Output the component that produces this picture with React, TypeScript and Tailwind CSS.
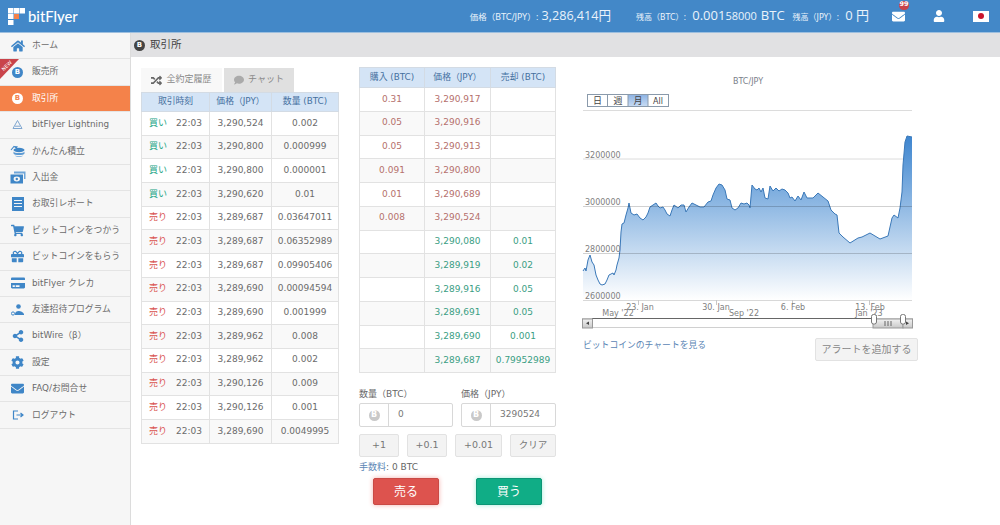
import { FaHome, FaShoppingCart, FaGift, FaCreditCard, FaShareAlt, FaCog, FaEnvelope, FaUser, FaRandom, FaComment } from "react-icons/fa";

const SANS = "font-['DejaVu_Sans','Noto_Sans_CJK_JP',sans-serif]";

function CoinIcon({ className }: { className?: string }) {
  return (
    <span className={"flex items-center justify-center rounded-full font-bold " + className}>B</span>
  );
}

function TriangleIcon() {
  return (
    <svg width="13" height="13" viewBox="0 0 13 13" fill="none" stroke="#7fa6d0" strokeWidth="1">
      <path d="M6.5 2.5 L11 10.5 H2 Z" />
      <path d="M4 8.2 H9" />
    </svg>
  );
}

function CoinsIcon() {
  return (
    <svg width="15" height="14" viewBox="0 0 15 14" fill="#3f86c7">
      <path d="M1 6 L4 2.5 L7 4" fill="none" stroke="#3f86c7" strokeWidth="1.1" />
      <path d="M5 2L8 2.5L6 5Z" />
      <ellipse cx="9" cy="6" rx="5.5" ry="2.2" />
      <path d="M3.5 7.5C4 9.5 14 9.5 14.5 7.5V9.5C14 11.5 4 11.5 3.5 9.5Z" fill="#5c9ad3" />
      <path d="M5 11.5C6 13.5 12 13.5 13 11.5C11 12.3 7 12.3 5 11.5Z" fill="#8db9e0" />
    </svg>
  );
}

function BillsIcon() {
  return (
    <svg width="16" height="13" viewBox="0 0 16 13" fill="#3f86c7">
      <path d="M4 0.5H15.5V8H14V2.5H4Z" fill="#6fa5d8" />
      <path d="M0.5 3.5H13V12.5H0.5Z" />
      <ellipse cx="6.8" cy="8" rx="3.2" ry="2.4" fill="#f6f6f6" />
      <circle cx="6.8" cy="8" r="1.2" />
    </svg>
  );
}

function ReportIcon() {
  return (
    <svg width="12" height="14" viewBox="0 0 12 14" fill="#3f86c7">
      <path d="M0 0H12V14H0Z" />
      <path d="M2 3H10V4H2ZM2 6H10V7H2ZM2 9H10V10H2Z" fill="#f5f5f5" />
    </svg>
  );
}

function FriendsIcon() {
  return (
    <svg width="13" height="12" viewBox="0 0 13 12" fill="#3f86c7">
      <circle cx="7.5" cy="2.5" r="2.3" />
      <path d="M4 10 C4 6 11 6 13 10 V11 H4Z" />
      <circle cx="2" cy="9.5" r="1.6" fill="none" stroke="#3f86c7" />
    </svg>
  );
}

function LogoutIcon() {
  return (
    <svg width="12" height="10" viewBox="0 0 12 10" fill="none" stroke="#3f86c7" strokeWidth="1.2">
      <path d="M6 1H1.5V9H6" />
      <path d="M4.5 5H11M8.5 3L11 5L8.5 7" />
    </svg>
  );
}

const ICON = "text-[#3f86c7]";
const NAV = [
  { label: "ホーム", icon: <FaHome className={ICON} size={14} /> },
  { label: "販売所", icon: <CoinIcon className="h-[11px] w-[11px] bg-[#3f86c7] text-[7px] text-white" /> },
  { label: "取引所", icon: <CoinIcon className="h-[11px] w-[11px] bg-white text-[7px] text-[#f4824a]" />, active: true },
  { label: "bitFlyer Lightning", icon: <TriangleIcon /> },
  { label: "かんたん積立", icon: <CoinsIcon /> },
  { label: "入出金", icon: <BillsIcon /> },
  { label: "お取引レポート", icon: <ReportIcon /> },
  { label: "ビットコインをつかう", icon: <FaShoppingCart className={ICON} size={13} /> },
  { label: "ビットコインをもらう", icon: <FaGift className={ICON} size={13} /> },
  { label: "bitFlyer クレカ", icon: <FaCreditCard className={ICON} size={14} /> },
  { label: "友達招待プログラム", icon: <FriendsIcon /> },
  { label: "bitWire（β）", icon: <FaShareAlt className={ICON} size={12} /> },
  { label: "設定", icon: <FaCog className={ICON} size={13} /> },
  { label: "FAQ/お問合せ", icon: <FaEnvelope className={ICON} size={13} /> },
  { label: "ログアウト", icon: <LogoutIcon /> },
];

const TRADES = [
  ["買い", "3,290,524", "0.002"],
  ["買い", "3,290,800", "0.000999"],
  ["買い", "3,290,800", "0.000001"],
  ["買い", "3,290,620", "0.01"],
  ["売り", "3,289,687", "0.03647011"],
  ["売り", "3,289,687", "0.06352989"],
  ["売り", "3,289,687", "0.09905406"],
  ["売り", "3,289,690", "0.00094594"],
  ["売り", "3,289,690", "0.001999"],
  ["売り", "3,289,962", "0.008"],
  ["売り", "3,289,962", "0.002"],
  ["売り", "3,290,126", "0.009"],
  ["売り", "3,290,126", "0.001"],
  ["売り", "3,289,690", "0.0049995"],
];

const BOOK = [
  ["0.31", "3,290,917", ""],
  ["0.05", "3,290,916", ""],
  ["0.05", "3,290,913", ""],
  ["0.091", "3,290,800", ""],
  ["0.01", "3,290,689", ""],
  ["0.008", "3,290,524", ""],
  ["", "3,290,080", "0.01"],
  ["", "3,289,919", "0.02"],
  ["", "3,289,916", "0.05"],
  ["", "3,289,691", "0.05"],
  ["", "3,289,690", "0.001"],
  ["", "3,289,687", "0.79952989"],
];

const LINE =
  "M583 271L585 268L586 271L588 260L590 255L592 262L594 265L596 275L598 280L600 284L602 285L605 284L607 280L609 275L611 274L613 273L614 275L616 270L617 265L619 258L620 250L621 232L622 224L624 223L626 215L628 208L629 203L631 213L634 215L637 214L640 218L643 220L646 217L648 213L650 207L653 205L656 203L658 206L660 208L663 207L665 210L667 214L670 216L672 210L674 205L678 208L681 205L684 205L686 212L689 207L692 203L696 205L700 207L704 207L708 202L711 201L713 195L716 188L719 184L722 185L725 190L727 199L730 200L732 208L735 210L738 208L741 203L744 204L747 203L749 205L750 208L752 185L755 189L757 190L759 188L761 192L763 188L765 198L768 199L770 186L773 191L776 188L779 191L782 189L785 190L788 193L790 198L792 197L795 201L798 196L801 200L804 192L807 198L813 198L818 193L823 197L828 201L831 210L835 214L837 215L839 233L843 237L850 243L858 238L862 237L870 233L875 236L880 239L888 236L892 218L894 215L898 218L900 208L902 192L903 165L905 142L907 136L912 137";

function Chart() {
  return (
    <svg width="347" height="265" viewBox="578 67 347 265" className="block">
      <defs>
        <linearGradient id="area" x1="0" y1="136" x2="0" y2="300" gradientUnits="userSpaceOnUse">
          <stop offset="0" stopColor="#3d85cf" />
          <stop offset="1" stopColor="#ffffff" />
        </linearGradient>
        <linearGradient id="on" x1="0" y1="0" x2="0" y2="1">
          <stop offset="0" stopColor="#8fb4e4" />
          <stop offset="1" stopColor="#c6daf3" />
        </linearGradient>
        <linearGradient id="bar" x1="0" y1="0" x2="0" y2="1">
          <stop offset="0" stopColor="#f2f2f2" />
          <stop offset="1" stopColor="#c8c8c8" />
        </linearGradient>
      </defs>
      <text x="748" y="84" textAnchor="middle" fontSize="8" fill="#7a808a" fontFamily="DejaVu Sans">BTC/JPY</text>

      <g fontFamily="DejaVu Sans, Noto Sans CJK JP" fontSize="9" fill="#444" textAnchor="middle">
        <rect x="587.5" y="94.5" width="81" height="12" fill="#fff" stroke="#8a9aab" />
        <rect x="628" y="95" width="20" height="11" fill="url(#on)" />
        <path d="M607.5 94.5V106.5M628 94.5V106.5M648 94.5V106.5" stroke="#8a9aab" />
        <text x="597.5" y="104">日</text>
        <text x="618" y="104">週</text>
        <text x="638" y="104">月</text>
        <text x="658" y="104" fontSize="8">All</text>
      </g>

      <path d="M583 110.5H912" stroke="#dcdcdc" strokeWidth="1" />
      <path d="M583 159H912" stroke="#dcdcdc" strokeWidth="1" />
      <path d={LINE + "L912 300L583 300Z"} fill="url(#area)" />
      <path d={LINE} fill="none" stroke="#3a78b8" strokeWidth="1" />
      <path d="M583 206.5H912" stroke="#000" strokeOpacity="0.18" strokeWidth="1" />
      <path d="M583 253.5H912" stroke="#000" strokeOpacity="0.18" strokeWidth="1" />
      <path d="M583 300.5H912" stroke="#d8d8d8" strokeWidth="1" />
      <path d="M638.5 300V305M716.5 300V305M792.5 300V305M869.5 300V305" stroke="#c8c8c8" />

      <g fontFamily="DejaVu Sans" fontSize="8" fill="#808080">
        <text x="585" y="158">3200000</text>
        <text x="585" y="205">3000000</text>
        <text x="585" y="252">2800000</text>
        <text x="585" y="299">2600000</text>
        <g textAnchor="middle">
          <text x="640" y="310">23. Jan</text>
          <text x="716" y="310">30. Jan</text>
          <text x="793" y="310">6. Feb</text>
          <text x="870" y="310">13. Feb</text>
          <text x="618" y="316">May '22</text>
          <text x="744" y="316">Sep '22</text>
          <text x="869" y="316">Jan '23</text>
        </g>
      </g>

      <rect x="582.5" y="318.5" width="330" height="9" fill="#fff" stroke="#d0d0d0" />
      <path d="M592 318.5H873" stroke="#666" strokeWidth="1.2" />
      <rect x="582.5" y="319" width="10" height="9" fill="url(#bar)" stroke="#999" />
      <path d="M589 321.5V325L586 323.2Z" fill="#444" />
      <rect x="873" y="319" width="30" height="9" fill="url(#bar)" stroke="#999" />
      <path d="M885 321V326M888 321V326M891 321V326" stroke="#666" />
      <rect x="903" y="319" width="9.5" height="9" fill="url(#bar)" stroke="#999" />
      <path d="M906 321.5V325L909 323.2Z" fill="#444" />
      <rect x="871.5" y="314.5" width="5" height="9.5" rx="2" fill="#fff" stroke="#777" />
      <rect x="900.5" y="314.5" width="5" height="9.5" rx="2" fill="#fff" stroke="#777" />
    </svg>
  );
}

function CoinInput({ label, value, width }: { label: string; value: string; width: string }) {
  return (
    <div className={width}>
      <div className="h-[20px] text-[9px] leading-[22px] text-[#666]">{label}</div>
      <div className="flex h-[24px] rounded-[2px] border border-[#d8d8d8] bg-white">
        <div className="flex w-[29px] items-center justify-center border-r border-[#d8d8d8]">
          <CoinIcon className="h-[11px] w-[11px] bg-[#c9c9c9] text-[8px] text-white" />
        </div>
        <div className="flex items-center pl-[9px] text-[9px] text-[#777]">{value}</div>
      </div>
    </div>
  );
}

export default function App() {
  return (
    <div className={"h-[525px] w-[1000px] overflow-hidden bg-white " + SANS}>
      <header className="flex h-[33px] items-center border-b border-[#9dbfdf] bg-[#4388c8] text-white">
        <div className="flex items-center pl-[8px]">
          <svg width="17" height="17" viewBox="0 0 17 17" className="mr-[3px]">
            <path d="M0 0H5.5V5.5H0ZM6 0H11.5V5.5H6ZM12 0H17V5.5H12ZM0 6H5.5V11H0ZM0 12H5.5V17H0Z" fill="#fff" />
            <path d="M6 6H11V11H6Z" fill="#f4824a" />
          </svg>
          <span className="font-['Lato',sans-serif] text-[14.8px] font-medium leading-none">bitFlyer</span>
        </div>
        <div className="ml-auto flex items-baseline text-[#eaf3fb]">
          <span className="text-[8.5px]">価格（BTC/JPY）:</span>
          <span className="ml-[3px] font-['Open_Sans','Noto_Sans_CJK_JP',sans-serif] text-[12.6px]">3,286,414円</span>
          <span className="ml-[25px] text-[8px]">残高（BTC）:</span>
          <span className="ml-[6px] font-['Open_Sans',sans-serif] text-[13px]">0.001</span>
          <span className="font-['Open_Sans',sans-serif] text-[11px]">58000</span>
          <span className="ml-[4px] font-['Open_Sans',sans-serif] text-[13px]">BTC</span>
          <span className="ml-[8px] text-[8px]">残高（JPY）:</span>
          <span className="ml-[6px] font-['Open_Sans','Noto_Sans_CJK_JP',sans-serif] text-[13px]">0 円</span>
        </div>
        <div className="relative ml-[22px] flex w-[14px] justify-center">
          <FaEnvelope size={13} />
          <span className="absolute -top-[9px] left-[8px] flex h-[9px] w-[10px] items-center justify-center rounded-full bg-[#c9434a] text-[6.5px] font-bold">99</span>
        </div>
        <FaUser size={12} className="ml-[28px]" />
        <div className="ml-[28px] mr-[11px] flex h-[11px] w-[16px] items-center justify-center bg-white">
          <span className="h-[6px] w-[6px] rounded-full bg-[#c9142c]" />
        </div>
      </header>

      <div className="flex h-[492px]">
        <nav className="relative w-[131px] shrink-0 overflow-hidden border-r border-[#dcdcdc] bg-[#f6f6f6]">
          {NAV.map((item) => (
            <div
              key={item.label}
              className={
                "flex h-[26.4px] items-center border-b border-[#e4e4e4] text-[8.8px] " +
                (item.active ? "bg-[#f4824a] text-white" : "text-[#6b6b6b]")
              }
            >
              <span className="flex w-[32px] shrink-0 justify-center pl-[3px]">{item.icon}</span>
              <span className="whitespace-nowrap">{item.label}</span>
            </div>
          ))}
          <svg width="19" height="20" viewBox="0 0 19 20" className="absolute left-0 top-[26px]">
            <path d="M0 0H19L0 20Z" fill="#c9434a" />
            <text x="7" y="8.5" textAnchor="middle" fontSize="5" fill="#fff" fontFamily="DejaVu Sans" transform="rotate(-45 7 7)">NEW</text>
          </svg>
        </nav>

        <main className="min-w-0 flex-1">
          <div className="flex h-[24px] items-center bg-[#e1e1e3] pl-[3px] text-[#444]">
            <CoinIcon className="h-[11px] w-[11px] bg-[#444] text-[7px] text-white" />
            <span className="ml-[5px] text-[10.5px]">取引所</span>
          </div>

          <div className="flex pl-[10px] pt-[10px]">
            <div className="w-[198px] shrink-0 pt-[1px]">
              <div className="flex h-[24px] text-[9px] text-[#888]">
                <div className="flex w-[81px] items-center justify-center gap-[4px] bg-[#f8f8f8]">
                  <FaRandom size={11} className="text-[#666]" />
                  全約定履歴
                </div>
                <div className="ml-[2px] flex w-[70px] items-center justify-center gap-[4px] bg-[#e0e0e0]">
                  <FaComment size={10} className="text-[#aaa]" />
                  チャット
                </div>
              </div>
              <table className="w-full table-fixed border-collapse text-center text-[9px] text-[#6b6b6b]">
                <colgroup>
                  <col className="w-[68px]" />
                  <col className="w-[62px]" />
                  <col />
                </colgroup>
                <thead>
                  <tr className="h-[19px] bg-[#d4e4f6] text-[8.8px] text-[#44709f]">
                    <th className="border border-[#d3dbe4] font-normal">取引時刻</th>
                    <th className="border border-[#d3dbe4] font-normal">価格（JPY）</th>
                    <th className="border border-[#d3dbe4] font-normal">数量 (BTC)</th>
                  </tr>
                </thead>
                <tbody>
                  {TRADES.map((row, i) => (
                    <tr key={i} className={"h-[23.7px] " + (i % 2 ? "bg-[#f9f9f9]" : "bg-white")}>
                      <td className="border border-[#e2e2e2] whitespace-nowrap">
                        <span className={row[0] === "買い" ? "text-[#22a585]" : "text-[#d9534f]"}>{row[0]}</span>
                        <span className="ml-[9px]">22:03</span>
                      </td>
                      <td className="border border-[#e2e2e2]">{row[1]}</td>
                      <td className="border border-[#e2e2e2]">{row[2]}</td>
                    </tr>
                  ))}
                </tbody>
              </table>
            </div>

            <div className="ml-[20px] w-[197px] shrink-0">
              <table className="w-full table-fixed border-collapse text-center text-[9px]">
                <colgroup>
                  <col className="w-[65px]" />
                  <col className="w-[66px]" />
                  <col />
                </colgroup>
                <thead>
                  <tr className="h-[20px] bg-[#d4e4f6] text-[8.8px] text-[#44709f]">
                    <th className="border border-[#d3dbe4] font-normal">購入 (BTC)</th>
                    <th className="border border-[#d3dbe4] font-normal">価格（JPY）</th>
                    <th className="border border-[#d3dbe4] font-normal">売却 (BTC)</th>
                  </tr>
                </thead>
                <tbody>
                  {BOOK.map((row, i) => {
                    const color = row[0] ? "text-[#b5706c]" : "text-[#3a9e83]";
                    return (
                      <tr key={i} className={"h-[23.75px] " + color + " " + (i % 2 ? "bg-[#f9f9f9]" : "bg-white")}>
                        <td className="border border-[#e2e2e2]">{row[0]}</td>
                        <td className="border border-[#e2e2e2]">{row[1]}</td>
                        <td className="border border-[#e2e2e2]">{row[2]}</td>
                      </tr>
                    );
                  })}
                </tbody>
              </table>

              <div className="mt-[10px] flex justify-between">
                <CoinInput label="数量（BTC）" value="0" width="w-[94px]" />
                <CoinInput label="価格（JPY）" value="3290524" width="w-[95px]" />
              </div>

              <div className="mt-[7px] flex h-[23px] justify-between text-[9.5px] text-[#777]">
                <button className="w-[40px] rounded-[2px] border border-[#e2e2e2] bg-[#f3f3f3]">+1</button>
                <button className="w-[40px] rounded-[2px] border border-[#e2e2e2] bg-[#f3f3f3]">+0.1</button>
                <button className="w-[47px] rounded-[2px] border border-[#e2e2e2] bg-[#f3f3f3]">+0.01</button>
                <button className="w-[46px] rounded-[2px] border border-[#e2e2e2] bg-[#f3f3f3]">クリア</button>
              </div>

              <div className="mt-[4px] text-[9px] leading-[12px] text-[#666]">
                <span className="text-[#5b86b5]">手数料</span>: 0 BTC
              </div>

              <div className="mt-[5px] flex pl-[14px] text-[12px] text-white">
                <button className="h-[27px] w-[66px] rounded-[2px] border border-[#c94a45] bg-[#dd534e] shadow-[0_0_5px_#f4b1ae]">売る</button>
                <button className="ml-[37px] h-[27px] w-[66px] rounded-[2px] border border-[#0c9675] bg-[#10ad86] shadow-[0_0_5px_#a4ecd9]">買う</button>
              </div>
            </div>

            <div className="ml-[22px] w-[347px] shrink-0">
              <Chart />
              <div className="flex items-start pl-[5px] pr-[7px] pt-[6px]">
                <a className="pt-[1px] text-[8.8px] text-[#5b86b5]">ビットコインのチャートを見る</a>
                <button className="ml-auto h-[23px] w-[103px] rounded-[2px] border border-[#e2e2e2] bg-[#f3f3f3] text-[10px] text-[#888]">アラートを追加する</button>
              </div>
            </div>
          </div>
        </main>
      </div>
    </div>
  );
}
